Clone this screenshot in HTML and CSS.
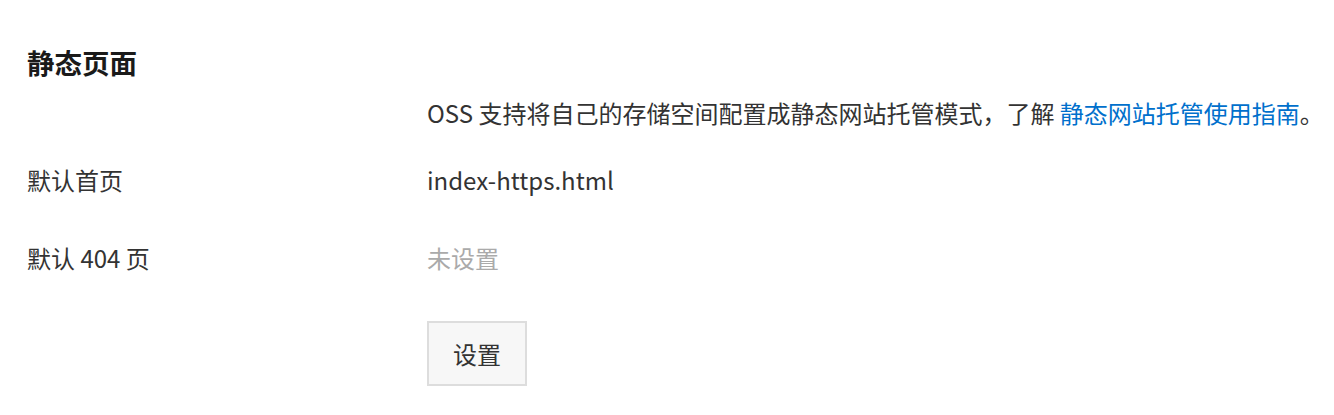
FILE: index.html
```html
<!DOCTYPE html>
<html lang="zh-CN">
<head>
<meta charset="utf-8">
<title>静态页面</title>
<link rel="stylesheet" href="styles.css">
</head>
<body>
<section class="panel">
  <h2 class="title">静态页面</h2>
  <div class="rows">
    <div class="row row-intro">
      <div class="label"></div>
      <div class="value">OSS 支持将自己的存储空间配置成静态网站托管模式，了解 <a class="link" href="#">静态网站托管使用指南</a>。</div>
    </div>
    <div class="row row-index">
      <div class="label">默认首页</div>
      <div class="value">index-https.html</div>
    </div>
    <div class="row row-404">
      <div class="label">默认 404 页</div>
      <div class="value muted">未设置</div>
    </div>
    <div class="row row-action">
      <div class="label"></div>
      <div class="value"><button class="btn" type="button">设置</button></div>
    </div>
  </div>
</section>
</body>
</html>
```
FILE: styles.css
```css
html, body {
  margin: 0;
  padding: 0;
  background: #ffffff;
}
body {
  font-family: "Noto Sans CJK SC", "Noto Sans", sans-serif;
  color: #333333;
}
.panel {
  padding: 42px 27px 0 27px;
}
.title {
  margin: 0;
  font-size: 27.5px;
  line-height: 40px;
  font-weight: 700;
  color: #1a1a1a;
}
.rows {
  display: flex;
  flex-direction: column;
}
.row {
  display: grid;
  grid-template-columns: 400px 1fr;
  font-size: 24px;
  line-height: 36px;
}
.row-intro { margin-top: 13px; }
.row-index { margin-top: 31px; }
.row-404 { margin-top: 42px; }
.row-action { margin-top: 45px; }
.label {
  color: #333333;
}
.value {
  color: #333333;
  white-space: nowrap;
}
.muted {
  color: #aaaaaa;
}
.link {
  color: #0070cc;
  text-decoration: none;
}
.btn {
  font-family: inherit;
  font-size: 24px;
  color: #333333;
  background: #f7f7f7;
  border: 2px solid #dddddd;
  border-radius: 0;
  width: 100px;
  height: 65px;
  padding: 0;
  margin: 0;
}
```
